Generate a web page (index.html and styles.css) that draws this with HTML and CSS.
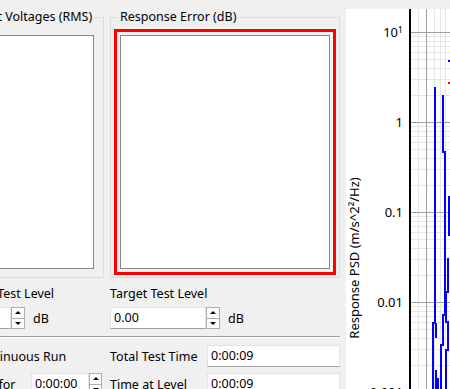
FILE: index.html
```html
<!DOCTYPE html>
<html lang="en">
<head>
    <meta charset="UTF-8">
    <meta name="viewport" content="width=device-width, initial-scale=1.0">
    <title>Vibration Control</title>
    <link rel="stylesheet" href="styles.css">
</head>
<body>
    <div class="window">
        <div class="controls">
            <div class="groups">
                <fieldset class="group group-output">
                    <legend>Output Voltages (RMS)</legend>
                    <div class="plotbox"></div>
                </fieldset>
                <fieldset class="group">
                    <legend>Response Error (dB)</legend>
                    <div class="plotbox selected"></div>
                </fieldset>
            </div>

            <div class="levels">
                <div class="field field-current">
                    <span class="field-label">Current Test Level</span>
                    <div class="spin-row">
                        <div class="spin spin-narrow">
                            <span class="spin-value"></span>
                            <span class="spin-buttons"><span class="up"></span><span class="down"></span></span>
                        </div>
                        <span>dB</span>
                    </div>
                </div>
                <div class="field">
                    <span class="field-label">Target Test Level</span>
                    <div class="spin-row">
                        <div class="spin">
                            <span class="spin-value">0.00</span>
                            <span class="spin-buttons"><span class="up"></span><span class="down"></span></span>
                        </div>
                        <span>dB</span>
                    </div>
                </div>
            </div>

            <hr class="separator">

            <div class="timing">
                <div class="row">
                    <span class="check"></span>
                    <span>Continuous Run</span>
                </div>
                <div class="row">
                    <span class="row-label">Total Test Time</span>
                    <span class="textbox">0:00:09</span>
                </div>
                <div class="row">
                    <span class="check"></span>
                    <span>Run for</span>
                    <div class="spin spin-time">
                        <span class="spin-value">0:00:00</span>
                        <span class="spin-buttons"><span class="up"></span><span class="down"></span></span>
                    </div>
                </div>
                <div class="row">
                    <span class="row-label">Time at Level</span>
                    <span class="textbox">0:00:09</span>
                </div>
            </div>
        </div>

        <div class="chart">
            <svg width="104" height="380" viewBox="346 9 104 380">
                <!-- minor grid -->
                <path class="grid-minor" d="
                    M411,95.5 H450 M411,79.5 H450 M411,68.5 H450 M411,59.5 H450 M411,52.5 H450 M411,46.5 H450 M411,41.5 H450 M411,36.5 H450
                    M411,185.5 H450 M411,169.5 H450 M411,158.5 H450 M411,149.5 H450 M411,142.5 H450 M411,136.5 H450 M411,131.5 H450 M411,126.5 H450
                    M411,275.5 H450 M411,259.5 H450 M411,248.5 H450 M411,239.5 H450 M411,232.5 H450 M411,226.5 H450 M411,221.5 H450 M411,216.5 H450
                    M411,365.5 H450 M411,349.5 H450 M411,338.5 H450 M411,329.5 H450 M411,322.5 H450 M411,316.5 H450 M411,311.5 H450 M411,306.5 H450
                    M418.5,9 V389 M434.5,9 V389 M440.5,9 V389 M445.5,9 V389"/>
                <!-- major grid -->
                <path class="grid-major" d="M411,32.5 H450 M411,122.5 H450 M411,212.5 H450 M411,302.5 H450 M426.5,9 V389"/>
                <!-- axis -->
                <path class="axis" d="M410,9 V389"/>

                <text class="tick" x="398" y="37">10</text>
                <text class="tick tick-sup" x="403" y="33">1</text>
                <text class="tick" x="403" y="127">1</text>
                <text class="tick" x="403" y="217">0.1</text>
                <text class="tick" x="403" y="307">0.01</text>
                <text class="tick" x="403" y="397">0.001</text>

                <text class="axis-title" transform="translate(359 258) rotate(-90)">Response PSD (m/s^2²/Hz)</text>

                <!-- response trace -->
                <path class="trace" d="M435,87 V323 H433 V389"/>
                <path class="trace" d="M436,323 V338 M436,370 V389 M438,378 V389"/>
                <path class="trace" d="M443,95 V152 H445 V315 H443 V345 H441 V389"/>
                <path class="trace" d="M449,196 V235 H451"/>
                <path class="trace" d="M448,258 V292 H446 V322 H448 V350 H446 V389"/>
                <path class="trace" d="M448,61 H451"/>
                <path class="limit" d="M448,83 H451"/>
            </svg>
        </div>
    </div>
</body>
</html>
```

FILE: styles.css
```css
body {
    margin: 0;
    background: #f0f0f0;
    font-family: "Noto Sans", "Open Sans", sans-serif;
    font-size: 12.5px;
    color: #000;
    overflow: hidden;
}
.window {
    display: flex;
    height: 389px;
}
/* left side: the group boxes and the level / time fields */
.controls {
    flex: none;
    width: 393px;
    margin-left: -53px;
    padding-top: 9px;
}
.groups,
.levels,
.timing {
    display: grid;
    grid-template-columns: 157px 230px;
    column-gap: 6px;
}
.group {
    margin: 0;
    min-width: 0;
    padding: 10px 9px 8px 9px;
    border: 1px solid #dcdcdc;
}
.group legend {
    padding: 0 2px;
    margin-left: -2px;
    line-height: 16px;
    white-space: nowrap;
}
.group-output legend {
    margin-left: 1px;
}
.plotbox {
    height: 234px;
    box-sizing: border-box;
    background: #fff;
    border: 1px solid #828790;
}
.plotbox.selected {
    outline: 3px solid #ff0000;
    outline-offset: 3px;
}
/* ---------------------------------------------- */
.levels {
    margin-top: 8px;
}
.field {
    display: flex;
    flex-direction: column;
    gap: 5px;
}
.field-current {
    padding-left: 2px;
}
.field-label {
    line-height: 16px;
    white-space: nowrap;
}
.spin-row {
    display: flex;
    align-items: center;
    gap: 8px;
}
.spin {
    display: flex;
    height: 22px;
}
.spin-value {
    width: 96px;
    box-sizing: border-box;
    padding-left: 3px;
    line-height: 20px;
    background: #fff;
    border: 1px solid #e3e3e3;
    border-bottom-color: #a0a0a0;
}
.spin-narrow .spin-value {
    width: 62px;
}
.spin-buttons {
    width: 14px;
    display: flex;
    flex-direction: column;
}
.spin-buttons span {
    flex: 1;
    display: flex;
    justify-content: center;
    align-items: center;
    background: #fdfdfd;
    border: 1px solid #adadad;
}
.spin-buttons .up {
    border-bottom: none;
}
.spin-buttons .up::after {
    content: "";
    border-left: 3px solid transparent;
    border-right: 3px solid transparent;
    border-bottom: 3px solid #000;
}
.spin-buttons .down::after {
    content: "";
    border-left: 3px solid transparent;
    border-right: 3px solid transparent;
    border-top: 3px solid #000;
}
.separator {
    margin: 7px 0 7px 53px;
    height: 0;
    border: none;
    border-top: 1px solid #a0a0a0;
    border-bottom: 1px solid #fff;
}
/* ---------------------------------------------- */
.timing {
    row-gap: 6px;
}
.row {
    display: flex;
    align-items: center;
    height: 22px;
    white-space: nowrap;
}
.check {
    width: 11px;
    height: 11px;
    margin: 0 8px 0 4px;
    background: #fff;
    border: 1px solid #333;
}
.row-label {
    width: 97px;
    flex: none;
}
.textbox {
    flex: 1;
    height: 22px;
    box-sizing: border-box;
    padding-left: 3px;
    line-height: 20px;
    background: #fff;
    border: 1px solid #e3e3e3;
    border-bottom-color: #a0a0a0;
}
.spin-time {
    margin-left: auto;
    margin-right: 2px;
}
.spin-time .spin-value {
    width: 58px;
}
.spin-time .spin-buttons {
    width: 13px;
}
/* ---------------------------------------------- */
.chart {
    flex: none;
    width: 104px;
    height: 380px;
    margin: 9px 0 0 6px;
    background: #fff;
}
.chart svg {
    display: block;
}
.grid-minor {
    fill: none;
    stroke: #e6e6e6;
    stroke-width: 1;
}
.grid-major {
    fill: none;
    stroke: #a0a0a0;
    stroke-width: 1;
}
.axis {
    stroke: #000;
    stroke-width: 2;
}
.tick {
    font-size: 13px;
    fill: #000;
    text-anchor: end;
}
.tick-sup {
    font-size: 9px;
}
.axis-title {
    font-size: 13px;
    fill: #000;
    text-anchor: middle;
}
.trace {
    fill: none;
    stroke: #0000ff;
    stroke-width: 2;
}
.limit {
    fill: none;
    stroke: #ff0000;
    stroke-width: 2;
}
```
